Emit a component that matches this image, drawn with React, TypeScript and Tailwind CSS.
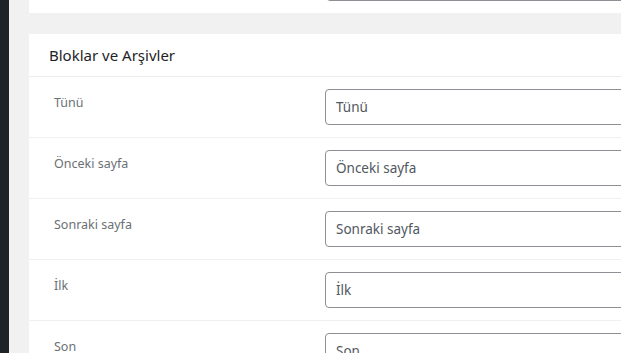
const rows = ["Tünü", "Önceki sayfa", "Sonraki sayfa", "İlk", "Son"];

export default function App() {
  return (
    <div
      className="flex h-[353px] w-[621px] overflow-hidden bg-[#f1f1f1]"
      style={{ fontFamily: '"Noto Sans", "Open Sans", sans-serif' }}
    >
      <div className="w-[9px] shrink-0 bg-[#1d2327]" />
      <div className="flex min-w-0 flex-1 flex-col pl-[20px]">
        {/* previous card, mostly scrolled away */}
        <div className="h-[13px] w-[800px] shrink-0 overflow-hidden bg-white">
          <div className="-mt-[35px] ml-[297px] h-[36px] w-[400px] rounded border border-[#8c8f94]" />
        </div>

        <div className="mt-[21px] w-[800px] shrink-0 bg-white">
          <div className="flex h-[43px] items-center border-b border-[#ececec] pl-[20px]">
            <h2 className="text-[15px] text-[#1d2327]">Bloklar ve Arşivler</h2>
          </div>
          {rows.map((label) => (
            <div key={label} className="flex h-[61px] border-b border-[#f0f0f1]">
              <div className="w-[296px] shrink-0 pl-[25px] pt-[17px] text-[12.5px] leading-[17px] text-[#6b7075]">
                {label}
              </div>
              <div className="pt-[12px]">
                <div className="flex h-[36px] w-[400px] items-center rounded border border-[#8c8f94] pl-[10px] text-[13.5px] text-[#50575e]">
                  {label}
                </div>
              </div>
            </div>
          ))}
        </div>
      </div>
    </div>
  );
}
